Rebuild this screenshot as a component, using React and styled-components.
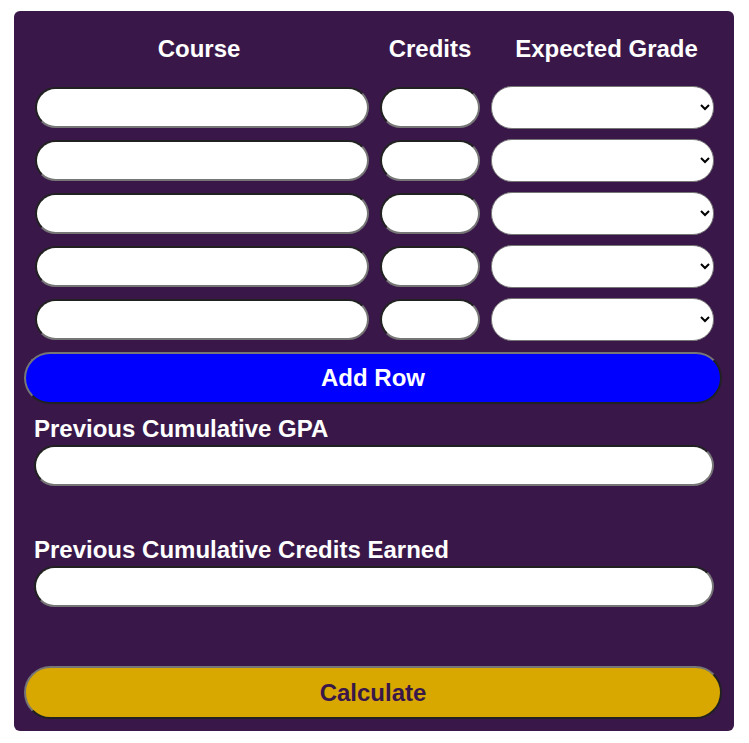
import styled, { createGlobalStyle } from "styled-components";
import { Fragment } from "react";

const GlobalStyle = createGlobalStyle`
    body {
        margin: 0;
        background: #ffffff;
        font-family: "Liberation Sans", Arial, sans-serif;
    }
`;

const Card = styled.form`
    width: 720px;
    box-sizing: border-box;
    margin: 11px 0 0 14px;
    padding: 24px 10px 12px;
    background-color: #391849;
    border-radius: 6px;
    display: flex;
    flex-direction: column;
`;

const Grid = styled.div`
    display: grid;
    grid-template-columns: 334px 100px 223px;
    column-gap: 11px;
    row-gap: 10px;
    align-items: center;
    padding: 0 10px 0 11px;
`;

const HeaderCell = styled.div`
    color: #ffffff;
    font-size: 24px;
    font-weight: bold;
    line-height: 28px;
    text-align: center;
    margin-bottom: 13px;
    transform: translateX(${(p) => p.$shift || 0}px);
`;

const Input = styled.input`
    box-sizing: border-box;
    width: 100%;
    height: 41px;
    border: 2px inset rgb(118, 118, 118);
    border-radius: 21px;
    background: #ffffff;
    padding: 0 14px;
    font-family: "Liberation Sans", Arial, sans-serif;
    font-size: 18px;
    outline: none;
`;

const Select = styled.select`
    box-sizing: border-box;
    width: 100%;
    height: 43px;
    border: 1px solid rgb(118, 118, 118);
    border-radius: 21px;
    background: #ffffff;
    padding: 0 4px 0 14px;
    font-family: "Liberation Sans", Arial, sans-serif;
    font-size: 18px;
`;

const Button = styled.button`
    box-sizing: border-box;
    width: 698px;
    height: ${(p) => p.$h}px;
    margin-top: ${(p) => p.$top}px;
    border: 2px outset rgb(118, 118, 118);
    border-radius: 27px;
    background-color: ${(p) => p.$bg};
    color: ${(p) => p.$color};
    font-family: "Liberation Sans", Arial, sans-serif;
    font-size: 24px;
    font-weight: bold;
    cursor: pointer;
`;

const Field = styled.div`
    display: flex;
    flex-direction: column;
    gap: 2px;
    padding: 0 10px;
    margin-top: ${(p) => p.$top}px;
`;

const Label = styled.label`
    color: #ffffff;
    font-size: 24px;
    font-weight: bold;
    line-height: 28px;
`;

const rows = [0, 1, 2, 3, 4];

const App = () => {
    return (
        <>
            <GlobalStyle />
            <Card onSubmit={(e) => e.preventDefault()}>
                <Grid>
                    <HeaderCell $shift={-3}>Course</HeaderCell>
                    <HeaderCell>Credits</HeaderCell>
                    <HeaderCell $shift={4}>Expected Grade</HeaderCell>
                    {rows.map((r) => (
                        <Fragment key={r}>
                            <Input type="text" />
                            <Input type="number" />
                            <Select defaultValue="">
                                <option value=""></option>
                                <option value="A">A</option>
                                <option value="B">B</option>
                                <option value="C">C</option>
                                <option value="D">D</option>
                                <option value="F">F</option>
                            </Select>
                        </Fragment>
                    ))}
                </Grid>
                <Button type="button" $top={11} $h={52} $bg="#0000ff" $color="#ffffff">
                    Add Row
                </Button>
                <Field $top={11}>
                    <Label>Previous Cumulative GPA</Label>
                    <Input type="text" />
                </Field>
                <Field $top={50}>
                    <Label>Previous Cumulative Credits Earned</Label>
                    <Input type="text" />
                </Field>
                <Button type="submit" $top={59} $h={53} $bg="#d9a800" $color="#391849">
                    Calculate
                </Button>
            </Card>
        </>
    );
};

export default App;
